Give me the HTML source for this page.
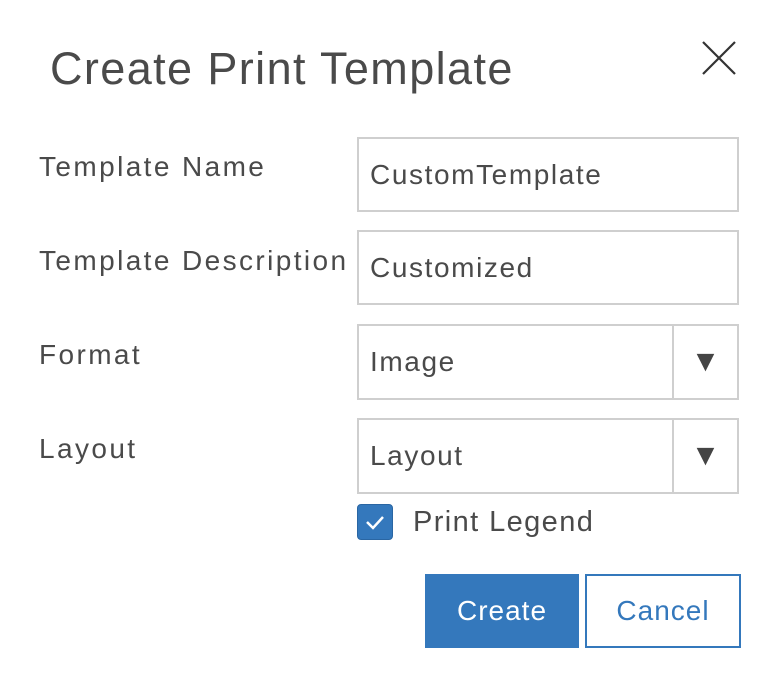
<!DOCTYPE html>
<html><head><style>
body{margin:0;width:776px;height:684px;background:#fff;font-family:"Liberation Sans",sans-serif;color:#4a4a4a;position:relative;overflow:hidden}
.a{position:absolute}
.t{left:50px;top:43px;font-size:45px;letter-spacing:1.4px;color:#4a4a4a}
.l{left:39px;font-size:28px;letter-spacing:2.4px}
.box{left:357px;width:382px;border:2px solid #cfcfcf;background:#fff;box-sizing:border-box;font-size:28px;letter-spacing:1.6px;padding-left:11px;display:flex;align-items:center}
.sel .arr{position:absolute;right:0;top:0;bottom:0;width:63px;border-left:2px solid #cfcfcf;display:flex;align-items:center;justify-content:center;font-size:30px;letter-spacing:0;color:#444}
</style></head><body>
<div class="a t">Create Print Template</div>
<svg class="a" style="left:702px;top:41px" width="34" height="34"><path d="M1 1L33 33M33 1L1 33" stroke="#333" stroke-width="2.2"/></svg>
<div class="a l" style="top:151px">Template Name</div>
<div class="a l" style="top:245px">Template Description</div>
<div class="a l" style="top:339px">Format</div>
<div class="a l" style="top:433px">Layout</div>
<div class="a box" style="top:137px;height:75px">CustomTemplate</div>
<div class="a box" style="top:230px;height:75px">Customized</div>
<div class="a box sel" style="top:324px;height:76px">Image<div class="arr">▼</div></div>
<div class="a box sel" style="top:418px;height:76px">Layout<div class="arr">▼</div></div>
<div class="a" style="left:357px;top:504px;width:36px;height:36px;background:#3478bc;border-radius:4px;box-sizing:border-box;border:1px solid #2a66a3">
<svg width="34" height="34"><path d="M9 17L15 23L25 12" stroke="#fff" stroke-width="2.5" fill="none"/></svg></div>
<div class="a" style="left:413px;top:506px;font-size:29px;letter-spacing:1.4px">Print Legend</div>
<div class="a" style="left:425px;top:574px;width:154px;height:74px;background:#3478bc;color:#fff;font-size:28px;letter-spacing:1px;display:flex;align-items:center;justify-content:center">Create</div>
<div class="a" style="left:585px;top:574px;width:156px;height:74px;border:2px solid #3478bc;box-sizing:border-box;color:#3478bc;font-size:28px;letter-spacing:1px;display:flex;align-items:center;justify-content:center">Cancel</div>
</body></html>
